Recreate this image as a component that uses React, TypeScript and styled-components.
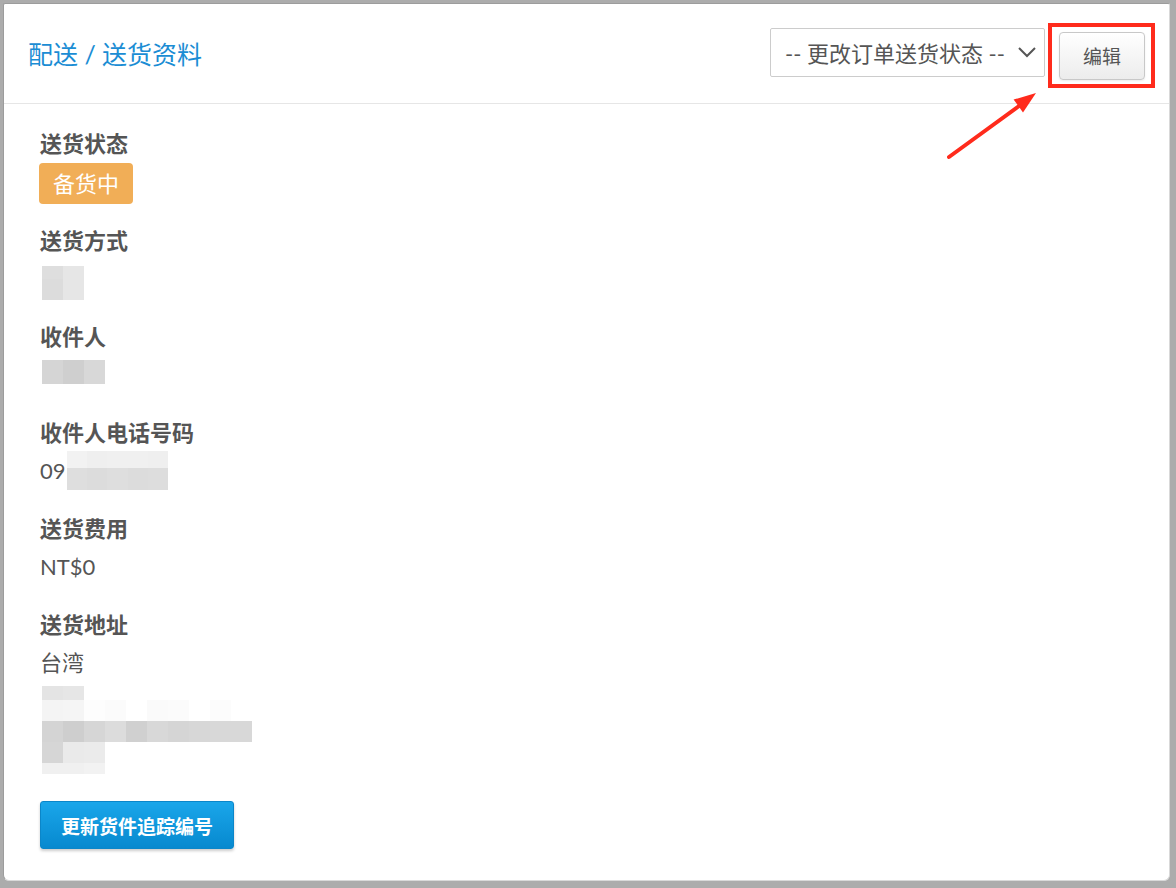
import React from "react";
import styled, { createGlobalStyle } from "styled-components";

const GlobalStyle = createGlobalStyle`
  html, body {
    margin: 0;
    padding: 0;
    background: #acacac;
  }
  * {
    box-sizing: border-box;
  }
  body {
    font-family: "Lato", "Noto Sans CJK SC", sans-serif;
    color: #555;
  }
`;

type MosaicRow = { h: number; cells: string[] };

const addressRows: MosaicRow[] = [
  { h: 14, cells: ["#e4e4e4", "#e6e6e6"] },
  {
    h: 21,
    cells: ["#f4f4f4", "#f5f5f5", "#fdfdfd", "#fbfbfb", "#fff", "#fafafa", "#fbfbfb", "#fff", "#fcfcfc"],
  },
  {
    h: 21,
    cells: ["#d4d4d4", "#cecece", "#d6d6d6", "#dcdcdc", "#d0d0d0", "#d8d8d8", "#d5d5d5", "#d7d7d7", "#d8d8d8", "#d8d8d8"],
  },
  { h: 21, cells: ["#d6d6d6", "#eaeaea", "#ebebeb"] },
  { h: 11, cells: ["#f0f0f0", "#f0f0f0", "#f2f2f2"] },
];

const methodRows: MosaicRow[] = [
  { h: 13, cells: ["#dedede", "#e6e6e6"] },
  { h: 21, cells: ["#dcdcdc", "#e6e6e6"] },
];

const nameRows: MosaicRow[] = [{ h: 24, cells: ["#d5d5d5", "#cfcfcf", "#d8d8d8"] }];

const phoneRows: MosaicRow[] = [
  { h: 17, cells: ["#f2f2f2", "#efefef", "#f0f0f0", "#f0f0f0", "#efefef"] },
  { h: 22, cells: ["#dedede", "#dcdcdc", "#dedede", "#dcdcdc", "#dddddd"] },
];

type MosaicProps = { rows: MosaicRow[]; mt?: number; ml?: number; mb?: number; cw?: number };

function Mosaic({ rows, mt = 0, ml = 2, mb = 0, cw = 21 }: MosaicProps) {
  return (
    <MosaicBox $mt={mt} $ml={ml} $mb={mb}>
      {rows.map((r, i) => (
        <MosaicLine key={i} $h={r.h}>
          {r.cells.map((c, j) => (
            <MosaicCell key={j} $c={c} $w={cw} />
          ))}
        </MosaicLine>
      ))}
    </MosaicBox>
  );
}

function App() {
  return (
    <>
      <GlobalStyle />
      <Page>
        <Card>
          <Header>
            <Title>配送 / 送货资料</Title>
            <Actions>
              <SelectBox>
                <span>-- 更改订单送货状态 --</span>
                <svg width="20" height="12" viewBox="0 0 20 12">
                  <path d="M2 2 L10 10 L18 2" fill="none" stroke="#555" strokeWidth="2" />
                </svg>
              </SelectBox>
              <Highlight>
                <EditButton>编辑</EditButton>
              </Highlight>
            </Actions>
          </Header>

          <Body>
            <Field>
              <Label>送货状态</Label>
              <Badge>备货中</Badge>
            </Field>
            <Field>
              <Label>送货方式</Label>
              <Value>
                <Mosaic rows={methodRows} mt={2} />
              </Value>
            </Field>
            <Field>
              <Label>收件人</Label>
              <Value>
                <Mosaic rows={nameRows} mt={0} />
              </Value>
            </Field>
            <Field>
              <Label>收件人电话号码</Label>
              <Value>
                09
                <Mosaic rows={phoneRows} mt={-5} ml={1} cw={20.4} />
              </Value>
            </Field>
            <Field>
              <Label>送货费用</Label>
              <Value>NT$0</Value>
            </Field>
            <Field>
              <Label>送货地址</Label>
              <Value>台湾</Value>
              <Mosaic rows={addressRows} mt={8} mb={-3} />
            </Field>
            <PrimaryButton>更新货件追踪编号</PrimaryButton>
          </Body>

          <Arrow width="110" height="80" viewBox="0 0 110 80">
            <line x1="10" y1="73" x2="80" y2="22" stroke="#ff2b1c" strokeWidth="4" strokeLinecap="round" />
            <polygon points="97,9 74.6,15.6 84,28.4" fill="#ff2b1c" />
          </Arrow>
        </Card>
      </Page>
    </>
  );
}

const Page = styled.div`
  height: 888px;
  padding: 3px 6px 7px 3px;
`;

const Card = styled.div`
  position: relative;
  height: 100%;
  background: #fff;
  border: 1px solid #d9d9d9;
  border-top-color: #9c9c9c;
  border-left-color: #9c9c9c;
  border-radius: 2px 2px 6px 6px;
  overflow: hidden;
`;

const Header = styled.div`
  height: 100px;
  display: flex;
  align-items: center;
  justify-content: space-between;
  padding: 0 24px;
  border-bottom: 1px solid #e6e6e6;
`;

const Title = styled.h2`
  margin: 0;
  font-size: 25px;
  font-weight: 400;
  line-height: 32px;
  color: #1b8dd4;
`;

const Actions = styled.div`
  display: flex;
  align-items: flex-start;
  gap: 14px;
`;

const SelectBox = styled.div`
  width: 275px;
  height: 49px;
  display: flex;
  align-items: center;
  justify-content: space-between;
  padding: 0 7px 0 14px;
  border: 1px solid #cccccc;
  border-radius: 2px;
  background: #fff;
  font-size: 22px;
  color: #555;
  white-space: nowrap;
`;

const Highlight = styled.div`
  position: relative;
  margin-top: 4px;
  &::after {
    content: "";
    position: absolute;
    top: -9px;
    left: -11px;
    right: -10px;
    bottom: -8px;
    border: 4px solid #ff2b1c;
    pointer-events: none;
  }
`;

const EditButton = styled.button`
  width: 86px;
  height: 48px;
  border: 1px solid #c8c8c8;
  border-radius: 4px;
  background: linear-gradient(#ffffff, #ececec);
  box-shadow: 0 1px 2px rgba(0, 0, 0, 0.08);
  font-family: "Lato", "Noto Sans CJK SC", sans-serif;
  font-size: 19px;
  color: #555;
  padding: 0;
`;

const Body = styled.div`
  padding: 27px 36px;
`;

const Field = styled.div`
  display: flex;
  flex-direction: column;
  align-items: flex-start;
  margin-bottom: 30px;
`;

const Label = styled.div`
  font-size: 22px;
  font-weight: 700;
  line-height: 26px;
  color: #555;
  margin-bottom: 10px;
`;

const Value = styled.div`
  height: 30px;
  display: flex;
  align-items: flex-start;
  font-size: 22px;
  line-height: 30px;
  color: #555;
`;

const Badge = styled.span`
  display: block;
  margin: -4px 0 -6px -1px;
  padding: 6px 14px;
  border-radius: 4px;
  background: #f1ae57;
  color: #fff;
  font-size: 22px;
  line-height: 29px;
`;

const MosaicBox = styled.div<{ $mt: number; $ml: number; $mb: number }>`
  display: flex;
  flex-direction: column;
  margin: ${(p) => p.$mt}px 0 ${(p) => p.$mb}px ${(p) => p.$ml}px;
  flex-shrink: 0;
`;

const MosaicLine = styled.div<{ $h: number }>`
  display: flex;
  height: ${(p) => p.$h}px;
`;

const MosaicCell = styled.div<{ $c: string; $w: number }>`
  width: ${(p) => p.$w}px;
  height: 100%;
  background: ${(p) => p.$c};
`;

const PrimaryButton = styled.button`
  display: block;
  height: 48px;
  padding: 0 20px;
  border: 1px solid #0b86c9;
  border-radius: 3px;
  background: linear-gradient(#1aa6ea, #0789cf);
  box-shadow: 0 2px 3px rgba(0, 0, 0, 0.2);
  color: #fff;
  font-family: "Lato", "Noto Sans CJK SC", sans-serif;
  font-size: 19px;
  font-weight: 600;
`;

const Arrow = styled.svg`
  position: absolute;
  left: 935px;
  top: 80px;
  pointer-events: none;
`;

export default App;
